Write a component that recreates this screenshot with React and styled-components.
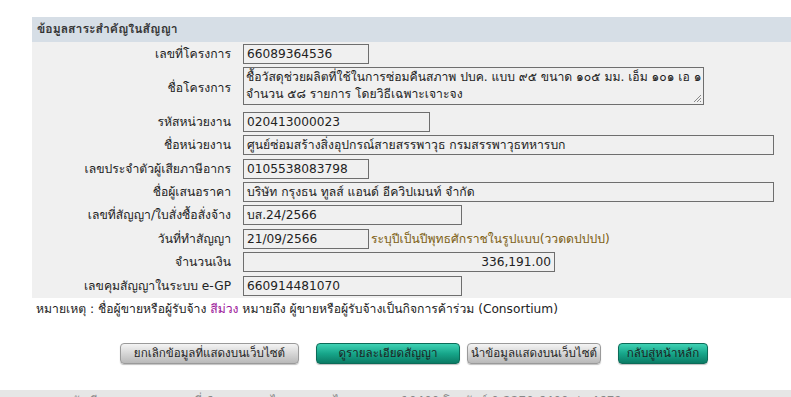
import { Fragment } from "react";
import styled, { createGlobalStyle } from "styled-components";

const GlobalStyle = createGlobalStyle`
	html, body {
		margin: 0;
		padding: 0;
		background: #fff;
		overflow: hidden;
	}
	body {
		font-family: "DejaVu Sans", Loma, sans-serif;
		font-size: 12.2px;
		line-height: 20px;
		color: #222;
	}
`;

const Page = styled.div`
	width: 791px;
	height: 397px;
	display: flex;
	flex-direction: column;
	padding-top: 17px;
	box-sizing: border-box;
	overflow: hidden;
`;

const Content = styled.div`
	margin-left: 32px;
	width: 764px;
	display: flex;
	flex-direction: column;
`;

const Panel = styled.div`
	background: #f0f0f0;
`;

const PanelHeader = styled.div`
	background: #d6dee6;
	height: 25px;
	line-height: 25px;
	padding-left: 5px;
	font-weight: bold;
	color: #333;
`;

const Form = styled.div`
	display: grid;
	grid-template-columns: 199px 1fr;
	column-gap: 12px;
	row-gap: 3.4px;
	padding: 2px 0;
	align-items: center;
`;

const Label = styled.div`
	text-align: right;
	white-space: nowrap;
	line-height: 20px;
`;

const Field = styled.div`
	display: flex;
	align-items: center;
	height: ${({ $tall }) => ($tall ? 38 : 20)}px;
	margin-bottom: ${({ $after }) => $after || 0}px;
`;

const Input = styled.div`
	width: ${({ $w }) => $w}px;
	height: 20px;
	box-sizing: border-box;
	border: 1px solid #6e6e6e;
	background: #f0f0f0;
	padding: 0 3px;
	line-height: 18px;
	white-space: nowrap;
	overflow: hidden;
	text-align: ${({ $right }) => ($right ? "right" : "left")};
`;

const TextArea = styled.div`
	position: relative;
	width: 461px;
	height: 38px;
	box-sizing: border-box;
	border: 1px solid #6e6e6e;
	background: #f0f0f0;
	padding: 1px 2px;
	line-height: 17px;
	white-space: nowrap;
	overflow: hidden;
`;

const Grip = styled.svg`
	position: absolute;
	right: 1px;
	bottom: 1px;
`;

const Hint = styled.span`
	margin-left: 2px;
	color: #7d5e12;
	white-space: nowrap;
`;

const Note = styled.div`
	padding: 1px 0 0 4px;
	height: 20px;
	white-space: nowrap;
`;

const Purple = styled.span`
	color: #9c1499;
`;

const Buttons = styled.div`
	display: flex;
	margin-top: 24px;
	padding-left: 88px;
`;

const Button = styled.button`
	width: ${({ $w }) => $w}px;
	height: 21px;
	margin-left: ${({ $gap }) => $gap || 0}px;
	padding: 0;
	border-radius: 4px;
	font-family: inherit;
	font-size: 11.6px;
	line-height: 19px;
	color: #1e1e1e;
	cursor: pointer;
	white-space: nowrap;
	border: 1px solid ${({ $teal }) => ($teal ? "#0c6b58" : "#9a9a9a")};
	background: ${({ $teal }) =>
		$teal
			? "linear-gradient(#3fd2b4, #17a68a 50%, #0b7b65)"
			: "linear-gradient(#f4f4f4, #d6d6d6 50%, #b9b9b9)"};
	box-shadow: 0 1px 1px rgba(0, 0, 0, 0.25);
`;

const Footer = styled.div`
	margin-top: auto;
	height: 7px;
	flex-shrink: 0;
	background: #e6e6e6;
	overflow: hidden;
	padding-left: 50px;
	color: #888;
	font-size: 12px;
	line-height: 22px;
	white-space: nowrap;
`;

const rows = [
	{ label: "รหัสหน่วยงาน", value: "020413000023", w: 187 },
	{ label: "ชื่อหน่วยงาน", value: "ศูนย์ซ่อมสร้างสิ่งอุปกรณ์สายสรรพาวุธ กรมสรรพาวุธทหารบก", w: 531 },
	{ label: "เลขประจำตัวผู้เสียภาษีอากร", value: "0105538083798", w: 126 },
	{ label: "ชื่อผู้เสนอราคา", value: "บริษัท กรุงธน ทูลส์ แอนด์ อีควิปเมนท์ จำกัด", w: 531 },
	{ label: "เลขที่สัญญา/ใบสั่งซื้อสั่งจ้าง", value: "บส.24/2566", w: 219 },
	{ label: "วันที่ทำสัญญา", value: "21/09/2566", w: 126, hint: "ระบุปีเป็นปีพุทธศักราชในรูปแบบ(ววดดปปปป)" },
	{ label: "จำนวนเงิน", value: "336,191.00", w: 312, right: true },
	{ label: "เลขคุมสัญญาในระบบ e-GP", value: "660914481070", w: 219 },
];

const App = () => {
	return (
		<Page>
			<GlobalStyle />
			<Content>
				<Panel>
					<PanelHeader>ข้อมูลสาระสำคัญในสัญญา</PanelHeader>
					<Form>
						<Label>เลขที่โครงการ</Label>
						<Field>
							<Input $w={126}>66089364536</Input>
						</Field>
						<Label>ชื่อโครงการ</Label>
						<Field $tall $after={3}>
							<TextArea>
								ชื้อวัสดุช่วยผลิตที่ใช้ในการซ่อมคืนสภาพ ปบค. แบบ ๙๕ ขนาด ๑๐๕ มม. เอ็ม ๑๐๑ เอ ๑
								<br />
								จำนวน ๕๘ รายการ โดยวิธีเฉพาะเจาะจง
								<Grip width="10" height="10" viewBox="0 0 10 10">
									<path d="M9 2 L2 9 M9 5 L5 9 M9 8 L8 9" stroke="#888" strokeWidth="1" />
								</Grip>
							</TextArea>
						</Field>
						{rows.map((r) => (
							<Fragment key={r.label}>
								<Label>{r.label}</Label>
								<Field>
									<Input $w={r.w} $right={r.right}>
										{r.value}
									</Input>
									{r.hint && <Hint>{r.hint}</Hint>}
								</Field>
							</Fragment>
						))}
					</Form>
				</Panel>
				<Note>
					หมายเหตุ : ชื่อผู้ขายหรือผู้รับจ้าง <Purple>สีม่วง</Purple> หมายถึง ผู้ขายหรือผู้รับจ้างเป็นกิจการค้าร่วม (Consortium)
				</Note>
				<Buttons>
					<Button $w={179}>ยกเลิกข้อมูลที่แสดงบนเว็บไซต์</Button>
					<Button $w={144} $gap={17} $teal>
						ดูรายละเอียดสัญญา
					</Button>
					<Button $w={134} $gap={7}>
						นำข้อมูลแสดงบนเว็บไซต์
					</Button>
					<Button $w={90} $gap={17} $teal>
						กลับสู่หน้าหลัก
					</Button>
				</Buttons>
			</Content>
			<Footer>
				กรมบัญชีกลาง ถนนพระรามที่ 6 แขวงพญาไท เขตพญาไท กรุงเทพฯ 10400 โทรศัพท์ 0-2270-6400 ต่อ 4679
			</Footer>
		</Page>
	);
};

export default App;
